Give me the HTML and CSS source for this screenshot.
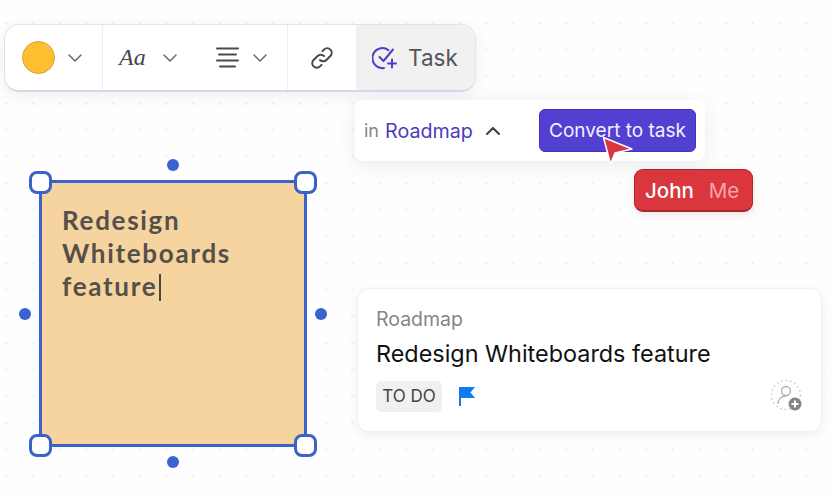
FILE: index.html
```html
<!DOCTYPE html>
<html lang="en">
<head>
<meta charset="utf-8">
<title>Whiteboard</title>
<link rel="stylesheet" href="styles.css">
</head>
<body>
<main class="board">
  <div class="toolbar">
    <div class="seg seg-color">
      <span class="swatch"></span>
      <svg class="chev" width="14" height="8" viewBox="0 0 14 8"><path d="M1 1l6 6 6-6"/></svg>
    </div>
    <div class="seg seg-text">
      <span class="aa">Aa</span>
      <svg class="chev" width="14" height="8" viewBox="0 0 14 8"><path d="M1 1l6 6 6-6"/></svg>
      <svg class="align" width="23" height="21" viewBox="0 0 23 21"><path d="M1 1.500h21M3 7.500h17M1 13.500h21M4 19.500h15"/></svg>
      <svg class="chev" width="14" height="8" viewBox="0 0 14 8"><path d="M1 1l6 6 6-6"/></svg>
    </div>
    <div class="seg seg-link">
      <svg class="link" width="24" height="24" viewBox="0 0 24 24"><path d="M10 14a4.500 4.500 0 0 0 6.400 0l4-4a4.500 4.500 0 0 0-6.400-6.400l-1.500 1.500"/><path d="M14 10a4.500 4.500 0 0 0-6.400 0l-4 4a4.500 4.500 0 0 0 6.400 6.400l1.500-1.500"/></svg>
    </div>
    <div class="seg seg-task">
      <svg class="task-icon" width="26" height="24" viewBox="0 0 26 24"><path d="M16.500 4.200A10 10 0 1 0 12 22"/><path d="M7.500 11l4 4L21 3.500"/><path d="M20 13.500v8M16 17.500h8"/></svg>
      <span>Task</span>
    </div>
  </div>

  <div class="popover">
    <span class="in">in</span>
    <span class="project">Roadmap</span>
    <svg class="chev-up" width="14" height="8" viewBox="0 0 14 8"><path d="M1 7l6-6 6 6"/></svg>
    <button class="convert" type="button">Convert to task</button>
  </div>

  <svg class="pointer" width="32" height="30" viewBox="0 0 32 30"><path d="M1.500 1.500L30 13l-17 4-4.500 11z"/></svg>
  <div class="user-tag"><span>John</span><span class="me">Me</span></div>

  <div class="sticky">
    <p class="note">Redesign Whiteboards feature<span class="caret"></span></p>
    <span class="corner tl"></span>
    <span class="corner tr"></span>
    <span class="corner bl"></span>
    <span class="corner br"></span>
    <span class="dot top"></span>
    <span class="dot bottom"></span>
    <span class="dot left"></span>
    <span class="dot right"></span>
  </div>

  <article class="card">
    <div class="card-list">Roadmap</div>
    <h2 class="card-title">Redesign Whiteboards feature</h2>
    <div class="card-meta">
      <span class="status">TO DO</span>
      <svg class="flag" width="18" height="20" viewBox="0 0 18 20"><path d="M1 1h16l-4.500 5.500L17 12H3v8H1z"/></svg>
      <svg class="assign" width="34" height="34" viewBox="0 0 34 34">
        <circle class="ring" cx="16" cy="16" r="14.500"/>
        <circle class="person" cx="16" cy="12" r="4.500"/>
        <path class="person" d="M8 25c0-5 3.500-8 8-8"/>
        <circle class="plus-bg" cx="25" cy="25" r="6.500"/>
        <path class="plus" d="M25 21.500v7M21.500 25h7"/>
      </svg>
    </div>
  </article>
</main>
</body>
</html>
```

FILE: styles.css
```css
* { box-sizing: border-box; }

html, body {
  margin: 0;
  height: 100%;
  overflow: hidden;
}

body {
  background: #fff;
  font-family: Inter, "Liberation Sans", sans-serif;
}

.board {
  position: relative;
  width: 832px;
  height: 500px;
  background-color: #fefefe;
  background-image: radial-gradient(circle, #f0f0f2 0, #f0f0f2 1px, transparent 1.6px);
  background-size: 26.67px 26.67px;
  background-position: -7px 10px;
}

/* toolbar */
.toolbar {
  position: absolute;
  left: 4px;
  top: 24px;
  width: 472px;
  height: 68px;
  display: flex;
  background: #fff;
  border: 1px solid #e3e3ea;
  border-bottom: 2px solid #d8d8e2;
  border-radius: 15px;
  box-shadow: 0 4px 14px rgba(80, 80, 150, .09);
  overflow: hidden;
}

.seg {
  display: flex;
  align-items: center;
  height: 100%;
  flex: none;
}

.seg-color {
  width: 98px;
  padding-left: 17px;
  border-right: 1px solid #eeeef1;
}

.swatch {
  width: 33px;
  height: 33px;
  border-radius: 50%;
  background: #fdbf30;
  border: 1px solid #d9a232;
  margin-right: 13px;
}

.chev, .chev-up { flex: none; }
.chev path, .chev-up path, .align path, .link path {
  fill: none;
  stroke: #6a6a70;
  stroke-width: 1.500;
  stroke-linecap: round;
  stroke-linejoin: round;
}

.seg-text {
  width: 185px;
  padding-left: 16px;
  border-right: 1px solid #eeeef1;
}

.aa {
  width: 30px;
  margin-right: 14px;
  font-family: "Liberation Serif", serif;
  font-style: italic;
  font-size: 24px;
  color: #45454b;
}

.align { margin-left: 39px; margin-right: 14px; }
.align path { stroke: #4a4a50; stroke-width: 2; }

.seg-link {
  width: 68px;
  justify-content: center;
}

.link path { stroke-width: 2; stroke: #45454b; }

.seg-task {
  flex: 1;
  gap: 10px;
  padding-left: 16px;
  background: #f1f1f2;
  font-size: 22.500px;
  color: #55555a;
}

.task-icon path {
  fill: none;
  stroke: #4f3fc6;
  stroke-width: 2;
  stroke-linecap: round;
  stroke-linejoin: round;
}

/* popover */
.popover {
  position: absolute;
  left: 355px;
  top: 100px;
  width: 350px;
  height: 61px;
  display: flex;
  align-items: center;
  padding: 0 9px;
  background: #fff;
  border-radius: 8px;
  box-shadow: 0 4px 18px rgba(70, 70, 110, .1);
  font-size: 19.700px;
}

.in { color: #85858c; margin-right: 6px; font-size: 18px; }
.project { color: #4a3cbd; }
.chev-up { margin-left: 13px; }
.chev-up path { stroke: #3f3f45; stroke-width: 2; }

.convert {
  margin-left: auto;
  width: 157px;
  height: 43px;
  padding: 0;
  background: #5140d2;
  border: 1px solid #4535b4;
  border-radius: 6px;
  color: #f3f1ff;
  font-family: inherit;
  font-size: 19px;
}

/* collaborator cursor */
.pointer {
  position: absolute;
  left: 602px;
  top: 136px;
}

.pointer path {
  fill: #d9363e;
  stroke: #fff;
  stroke-width: 1.500;
  stroke-linejoin: round;
}

.user-tag {
  position: absolute;
  left: 634px;
  top: 169px;
  width: 119px;
  height: 43px;
  display: flex;
  align-items: center;
  gap: 15px;
  padding-left: 10px;
  background: #d9363e;
  border: 1px solid #a8262d;
  border-bottom-width: 2px;
  border-radius: 9px;
  box-shadow: 0 3px 8px rgba(120, 40, 40, .12);
  color: #fff;
  font-size: 20.500px;
  font-weight: 500;
}

.me { color: #f8a5a8; font-weight: 400; }

/* sticky note */
.sticky {
  position: absolute;
  left: 39px;
  top: 180px;
  width: 268px;
  height: 267px;
  padding: 21px 20px;
  background: #f5d49f;
  border: 3px solid #3a62c8;
}

.note {
  margin: 0;
  width: 190px;
  font-family: Lato, sans-serif;
  font-weight: 700;
  font-size: 26px;
  line-height: 33px;
  letter-spacing: 1.700px;
  color: #55504a;
}

.caret {
  display: inline-block;
  width: 1.500px;
  height: 27px;
  margin-left: 2px;
  vertical-align: -5px;
  background: #4a4640;
}

.corner {
  position: absolute;
  width: 23px;
  height: 23px;
  background: #fff;
  border: 3.500px solid #3a62c8;
  border-radius: 8px;
}

.tl { left: -13px; top: -12px; }
.tr { right: -13px; top: -12px; }
.bl { left: -13px; bottom: -13px; }
.br { right: -13px; bottom: -13px; }

.dot {
  position: absolute;
  width: 12px;
  height: 12px;
  border-radius: 50%;
  background: #3a62d0;
}

.dot.top { left: 125px; top: -24px; }
.dot.bottom { left: 125px; bottom: -24px; }
.dot.left { left: -23px; top: 125px; }
.dot.right { right: -23px; top: 125px; }

/* task card */
.card {
  position: absolute;
  left: 357px;
  top: 288px;
  width: 465px;
  height: 144px;
  padding: 19px 18px 0;
  background: #fff;
  border: 1px solid #f0f0f2;
  border-radius: 12px;
  box-shadow: 0 3px 10px rgba(60, 60, 90, .08);
}

.card-list {
  font-size: 19.500px;
  line-height: 22px;
  color: #85858a;
}

.card-title {
  margin: 10px 0 0;
  font-size: 23.400px;
  font-weight: 400;
  line-height: 28px;
  color: #111;
}

.card-meta {
  display: flex;
  align-items: center;
  margin-top: 12px;
  height: 32px;
}

.status {
  width: 66px;
  height: 31px;
  display: flex;
  align-items: center;
  justify-content: center;
  background: #f0f0f1;
  border-radius: 5px;
  font-size: 17px;
  color: #444449;
}

.flag { margin-left: 16px; }
.flag path { fill: #0f7bec; }

.assign { margin-left: auto; margin-right: -1px; }

.ring {
  fill: none;
  stroke: #c4c4c8;
  stroke-width: 1.300;
  stroke-dasharray: 1.500 3;
}

.person {
  fill: none;
  stroke: #b0b0b4;
  stroke-width: 1.300;
}

.plus-bg { fill: #85858a; }

.plus {
  fill: none;
  stroke: #fff;
  stroke-width: 2;
}
```
